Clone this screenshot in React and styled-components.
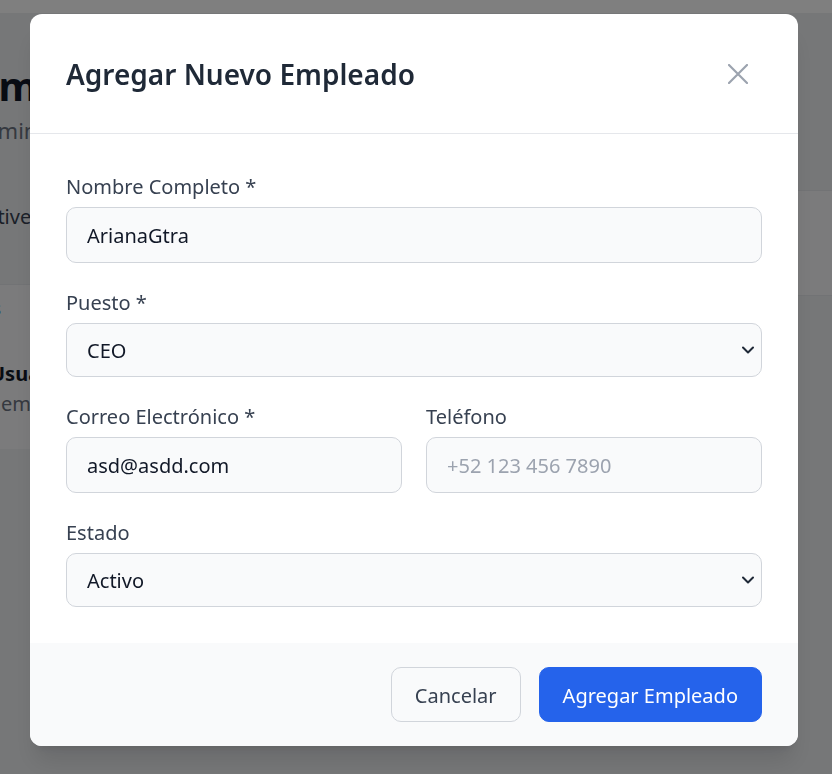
import React from "react";
import styled, { createGlobalStyle } from "styled-components";

const GlobalStyle = createGlobalStyle`
  * { box-sizing: border-box; }
  html, body { margin: 0; padding: 0; }
  body {
    font-family: "Noto Sans", "Open Sans", Arial, sans-serif;
    background: #eceef1;
    overflow: hidden;
  }
`;

/* ---------- background page (dimmed behind the modal) ---------- */
const Page = styled.div`
  height: 774px;
  display: flex;
  flex-direction: column;
  background: #eceef1;
  overflow: hidden;
`;

const TopBar = styled.div`
  height: 13px;
  background: #ffffff;
  flex-shrink: 0;
`;

const PageBody = styled.div`
  flex: 1;
  display: flex;
`;

const Main = styled.main`
  flex: 1;
  overflow: hidden;
`;

const MainInner = styled.div`
  margin-left: -24px;
  display: flex;
  flex-direction: column;
`;

const PageTitle = styled.h1`
  margin: 49px 0 0;
  font-size: 40px;
  line-height: 48px;
  font-weight: 700;
  color: #111827;
  white-space: nowrap;
`;

const PageSubtitle = styled.p`
  margin: 5px 0 0 -6px;
  font-size: 22px;
  line-height: 30px;
  color: #6b7280;
  white-space: nowrap;
`;

const FilterText = styled.div`
  margin: 58px 0 0 -1px;
  font-size: 20px;
  line-height: 28px;
  color: #374151;
  white-space: nowrap;
`;

const TableCard = styled.section`
  margin-top: 53px;
  height: 165px;
  background: #f6f7f8;
  border-top: 1px solid #e5e7eb;
  display: flex;
  flex-direction: column;
`;

const TabLink = styled.div`
  margin: 11px 0 0 -25px;
  font-size: 18px;
  line-height: 24px;
  color: #3b82f6;
  white-space: nowrap;
`;

const RowName = styled.div`
  margin: 40px 0 0 14px;
  font-size: 20px;
  line-height: 28px;
  font-weight: 700;
  color: #111827;
  white-space: nowrap;
`;

const RowMail = styled.div`
  margin: 2px 0 0 25px;
  font-size: 20px;
  line-height: 28px;
  color: #6b7280;
  white-space: nowrap;
`;

const Aside = styled.aside`
  width: 300px;
  display: flex;
  flex-direction: column;
`;

const AsideCard = styled.div`
  margin-top: 177px;
  height: 106px;
  background: #f6f7f8;
  border-top: 1px solid #e5e7eb;
  border-bottom: 1px solid #e5e7eb;
`;

/* ---------- modal ---------- */
const Overlay = styled.div`
  position: fixed;
  inset: 0;
  background: rgba(0, 0, 0, 0.5);
  display: flex;
  align-items: flex-start;
  justify-content: center;
  padding: 14px 34px 0 30px;
`;

const Modal = styled.div`
  width: 768px;
  background: #ffffff;
  border-radius: 12px;
  overflow: hidden;
  box-shadow: 0 20px 25px -5px rgba(0, 0, 0, 0.1), 0 8px 10px -6px rgba(0, 0, 0, 0.1);
  display: flex;
  flex-direction: column;
`;

const Header = styled.header`
  height: 120px;
  padding: 0 36px;
  border-bottom: 1px solid #e5e7eb;
  display: flex;
  align-items: center;
  justify-content: space-between;
`;

const Title = styled.h2`
  margin: 0;
  font-size: 28px;
  line-height: 36px;
  font-weight: 600;
  color: #1f2937;
`;

const CloseButton = styled.button`
  width: 48px;
  height: 48px;
  border: none;
  background: transparent;
  padding: 0;
  display: flex;
  align-items: center;
  justify-content: center;
  cursor: pointer;
  color: #9ca3af;
`;

const Body = styled.div`
  padding: 37px 36px 36px;
  display: flex;
  flex-direction: column;
  gap: 24px;
`;

const Row = styled.div`
  display: grid;
  grid-template-columns: 1fr 1fr;
  gap: 24px;
`;

const Field = styled.div`
  display: flex;
  flex-direction: column;
`;

const Label = styled.label`
  font-size: 20px;
  line-height: 32px;
  color: #374151;
  margin-bottom: 4px;
`;

const Input = styled.input`
  height: 56px;
  width: 100%;
  padding: 1px 20px 0;
  border: 1px solid #d1d5db;
  border-radius: 10px;
  background: #f9fafb;
  font-family: inherit;
  font-size: 20px;
  color: #111827;
  outline: none;
  &::placeholder { color: #9ca3af; }
`;

const SelectWrap = styled.div`
  position: relative;
`;

const Select = styled.select`
  appearance: none;
  -webkit-appearance: none;
  height: 54px;
  width: 100%;
  padding: 1px 40px 0 20px;
  border: 1px solid #d1d5db;
  border-radius: 10px;
  background: #f9fafb;
  font-family: inherit;
  font-size: 20px;
  color: #111827;
  outline: none;
`;

const Chevron = styled.svg`
  position: absolute;
  right: 8px;
  top: 50%;
  margin-top: -4px;
  pointer-events: none;
`;

const Footer = styled.footer`
  background: #f9fafb;
  padding: 24px 36px 24px;
  display: flex;
  justify-content: flex-end;
  gap: 18px;
`;

const Button = styled.button`
  height: 55px;
  padding: 2px 23px 0;
  border-radius: 10px;
  font-family: inherit;
  font-size: 20px;
  cursor: pointer;
  border: 1px solid ${(p) => (p.$primary ? "#2563eb" : "#d1d5db")};
  background: ${(p) => (p.$primary ? "#2563eb" : "#f9fafb")};
  color: ${(p) => (p.$primary ? "#ffffff" : "#374151")};
`;

const ChevronIcon = () => (
  <Chevron width="12" height="8" viewBox="0 0 12 8" fill="none">
    <path d="M1 1.5 L6 6.5 L11 1.5" stroke="#1f2937" strokeWidth="2" strokeLinecap="round" strokeLinejoin="round" />
  </Chevron>
);

export default function App() {
  return (
    <>
      <GlobalStyle />
      <Page>
        <TopBar />
        <PageBody>
          <Main>
            <MainInner>
              <PageTitle>Empleados</PageTitle>
              <PageSubtitle>Administra tu equipo de trabajo</PageSubtitle>
              <FilterText>Active</FilterText>
              <TableCard>
                <TabLink>Todos</TabLink>
                <RowName>Usuario Demo</RowName>
                <RowMail>empleado@empresa.com</RowMail>
              </TableCard>
            </MainInner>
          </Main>
          <Aside>
            <AsideCard />
          </Aside>
        </PageBody>
      </Page>
      <Overlay>
        <Modal role="dialog" aria-modal="true">
          <Header>
            <Title>Agregar Nuevo Empleado</Title>
            <CloseButton aria-label="Cerrar">
              <svg width="20" height="20" viewBox="0 0 20 20" fill="none">
                <path d="M1 1 L19 19 M19 1 L1 19" stroke="currentColor" strokeWidth="2.2" strokeLinecap="round" />
              </svg>
            </CloseButton>
          </Header>
          <Body>
            <Field>
              <Label>Nombre Completo *</Label>
              <Input defaultValue="ArianaGtra" />
            </Field>
            <Field>
              <Label>Puesto *</Label>
              <SelectWrap>
                <Select defaultValue="CEO">
                  <option>CEO</option>
                  <option>Gerente</option>
                  <option>Desarrollador</option>
                </Select>
                <ChevronIcon />
              </SelectWrap>
            </Field>
            <Row>
              <Field>
                <Label>Correo Electrónico *</Label>
                <Input type="email" defaultValue="asd@asdd.com" />
              </Field>
              <Field>
                <Label>Teléfono</Label>
                <Input placeholder="+52 123 456 7890" />
              </Field>
            </Row>
            <Field>
              <Label>Estado</Label>
              <SelectWrap>
                <Select defaultValue="Activo">
                  <option>Activo</option>
                  <option>Inactivo</option>
                </Select>
                <ChevronIcon />
              </SelectWrap>
            </Field>
          </Body>
          <Footer>
            <Button>Cancelar</Button>
            <Button $primary>Agregar Empleado</Button>
          </Footer>
        </Modal>
      </Overlay>
    </>
  );
}
